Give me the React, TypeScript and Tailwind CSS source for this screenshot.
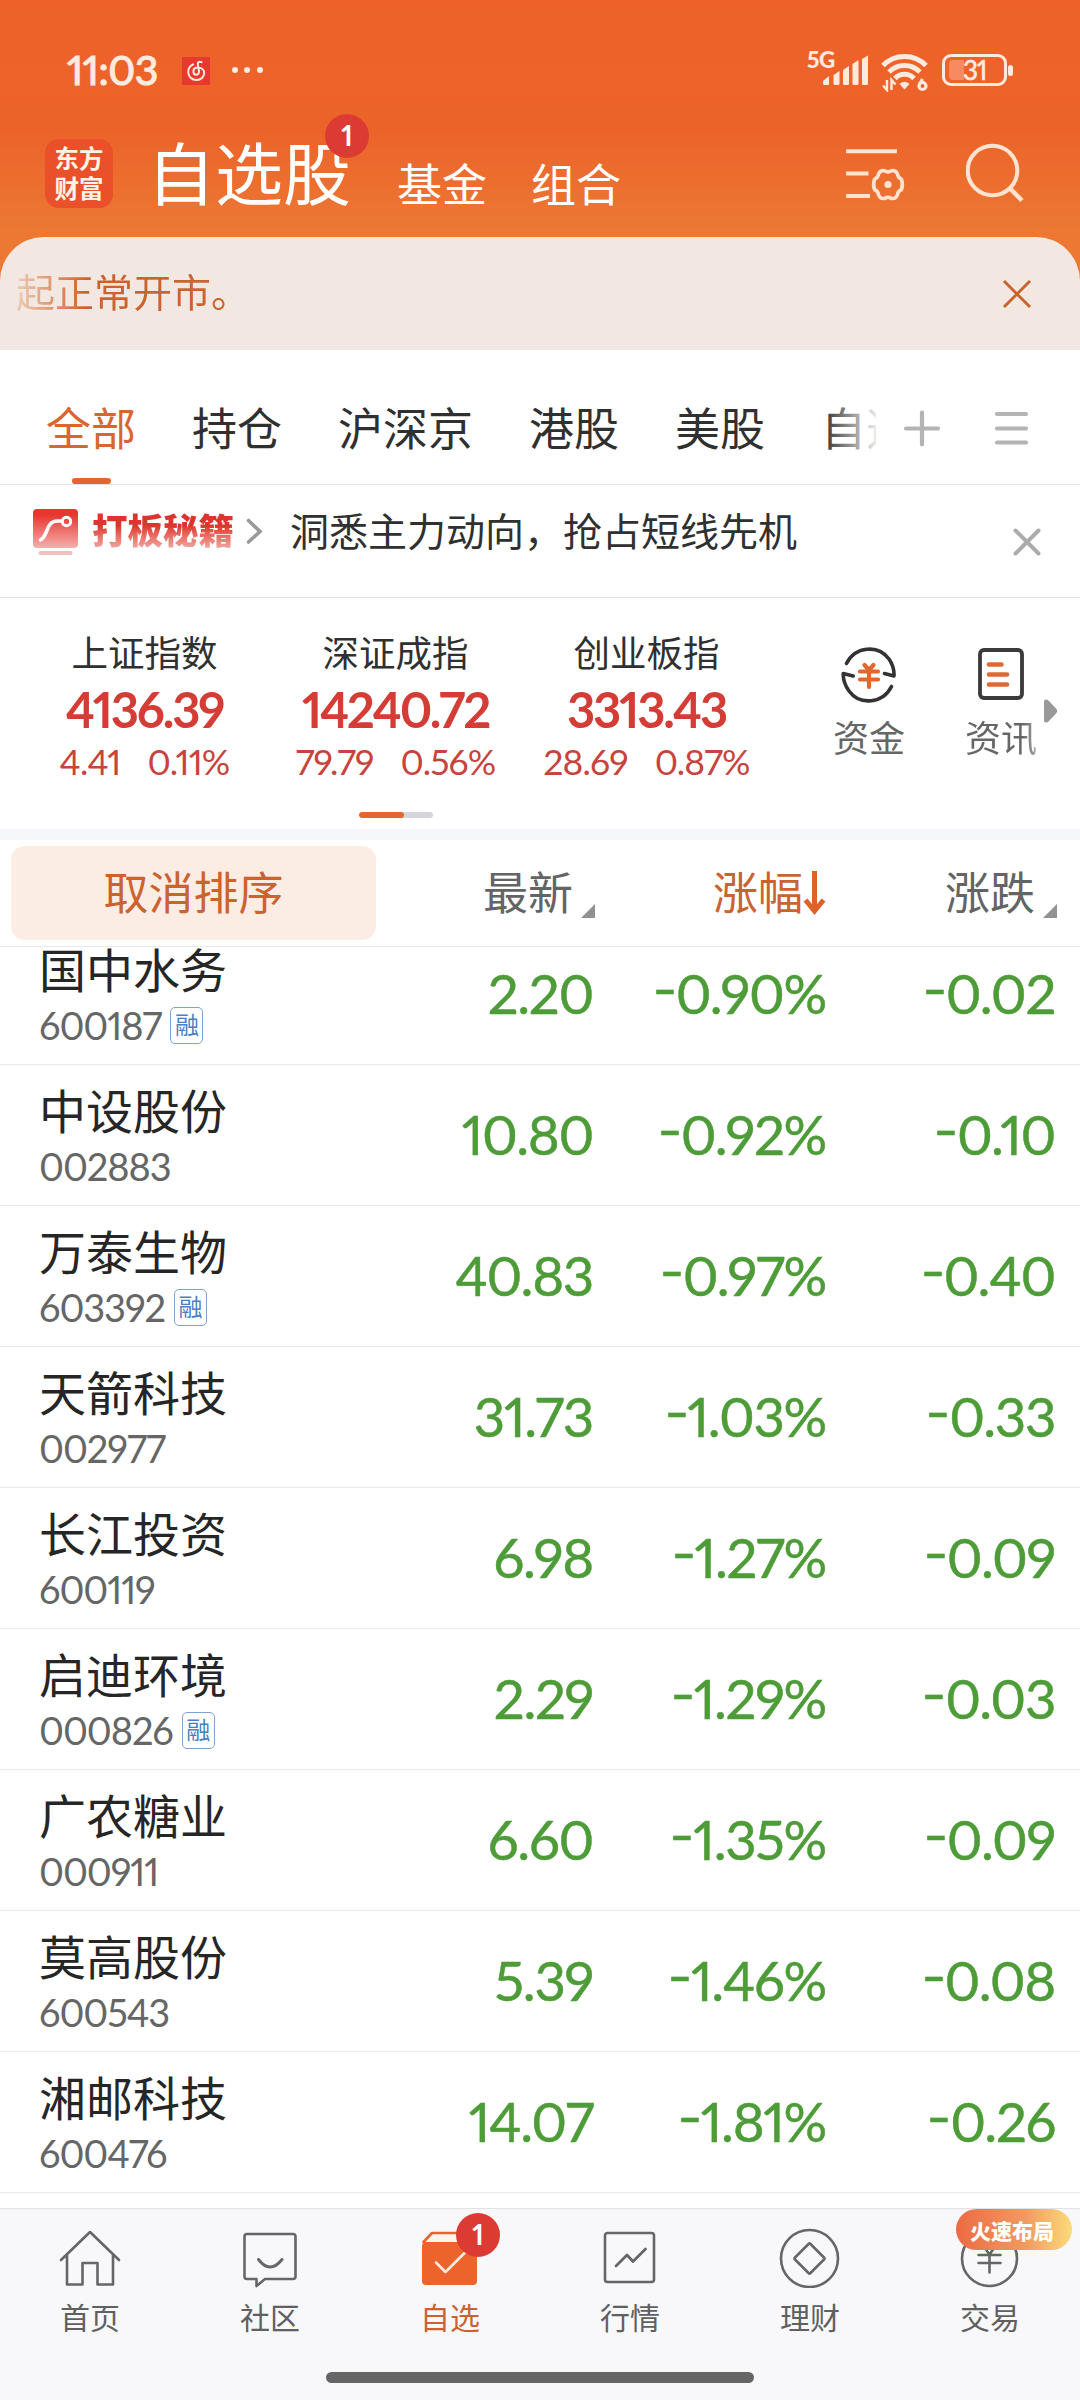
// ─────────────────────────────────────────────
//  Watchlist – Root Application
// ─────────────────────────────────────────────
import type { ReactNode } from 'react';

interface Stock {
  name: string;
  code: string;
  margin?: boolean;
  price: string;
  pct: string;
  diff: string;
}

const STOCKS: Stock[] = [
  { name: '国中水务', code: '600187', margin: true, price: '2.20',  pct: '-0.90%', diff: '-0.02' },
  { name: '中设股份', code: '002883',               price: '10.80', pct: '-0.92%', diff: '-0.10' },
  { name: '万泰生物', code: '603392', margin: true, price: '40.83', pct: '-0.97%', diff: '-0.40' },
  { name: '天箭科技', code: '002977',               price: '31.73', pct: '-1.03%', diff: '-0.33' },
  { name: '长江投资', code: '600119',               price: '6.98',  pct: '-1.27%', diff: '-0.09' },
  { name: '启迪环境', code: '000826', margin: true, price: '2.29',  pct: '-1.29%', diff: '-0.03' },
  { name: '广农糖业', code: '000911',               price: '6.60',  pct: '-1.35%', diff: '-0.09' },
  { name: '莫高股份', code: '600543',               price: '5.39',  pct: '-1.46%', diff: '-0.08' },
  { name: '湘邮科技', code: '600476',               price: '14.07', pct: '-1.81%', diff: '-0.26' },
];

const INDICES = [
  { name: '上证指数', value: '4136.39',  diff: '4.41',  pct: '0.11%' },
  { name: '深证成指', value: '14240.72', diff: '79.79', pct: '0.56%' },
  { name: '创业板指', value: '3313.43',  diff: '28.69', pct: '0.87%' },
];

const TABS = ['全部', '持仓', '沪深京', '港股', '美股', '自选'];

// ── Status bar ──
function StatusBar() {
  return (
    <div className="flex h-[114px] items-start pl-[67px] pr-[67px] pt-[46px] text-[#ffeadd]">
      <span className="h-12 w-[92px] whitespace-nowrap text-[41px] leading-[48px] tracking-[-0.500px] [-webkit-text-stroke:1.200px_currentColor]">11:03</span>
      <svg className="ml-[23px] mt-[11px]" width="28" height="28" viewBox="0 0 28 28" fill="none">
        <rect width="28" height="28" rx="1.5" fill="#e8392f" />
        <path
          d="M19.500 5.200c-2-1-4-.2-3.700 2l1.200 6.800c.4 2.500-1.300 3.700-2.700 3.700-1.700 0-2.900-1.400-2.900-3.200 0-2.300 1.900-3.800 4.300-3.900 4 0 6.500 2.300 6.500 5.500 0 3.800-3.300 6.900-7.700 6.900-4.700 0-8.300-3.400-8.300-7.900 0-3.500 1.800-6.200 4.900-7.700"
          stroke="#ffeadd" strokeWidth="2" strokeLinecap="round"
        />
      </svg>
      <svg className="ml-[21px] mt-5" width="34" height="8" viewBox="0 0 34 8" fill="currentColor">
        <circle cx="4" cy="4" r="3" />
        <circle cx="16" cy="4" r="3" />
        <circle cx="29" cy="4" r="3" />
      </svg>
      <div className="ml-auto flex">
        <span className="h-7 w-[29px] whitespace-nowrap text-[22.500px] font-black leading-7 tracking-[-0.500px]">5G</span>
        <svg className="-ml-[13px] mt-[9px]" width="46" height="31" viewBox="0 0 46 31" fill="currentColor">
          <path d="M0 26l6-5v9H1.500q-1.500 0-1.500-1.500zM10.500 20l6-4v12.500q0 1.500-1.500 1.500h-3q-1.500 0-1.500-1.500zM20 15l6-4v17.500q0 1.500-1.500 1.500h-3q-1.500 0-1.500-1.500zM29.500 9l6-4v23.500q0 1.500-1.500 1.500h-3q-1.500 0-1.500-1.500zM39 4l6-3.500v28q0 1.500-1.500 1.500h-3q-1.500 0-1.500-1.500z" />
        </svg>
        <svg className="ml-3" width="48" height="46" viewBox="0 0 48 46" fill="none" stroke="currentColor">
          <path d="M2 19.500a30 30 0 0 1 43 0M8 26a21.500 21.500 0 0 1 31 0M14 32.500a13 13 0 0 1 19 0" strokeWidth="5" />
          <path d="M18.500 38q5-4.500 10 0l-5 5.500z" fill="currentColor" stroke="none" />
          <path d="M6 34v10l-4-4.500M10.500 44V34l4 4.500" strokeWidth="2.400" />
          <path d="M41.500 33l-3.300 5.500" strokeWidth="3.200" />
          <circle cx="41.500" cy="40" r="3.500" strokeWidth="3.200" />
        </svg>
        <div className="ml-[13px] mt-2 flex h-8 w-[65px] items-center rounded-[9px] border-[3px] border-[#ffeadd] pl-1">
          <div className="h-5 w-[15px] rounded-l bg-[#f68b61]" />
          <span className="-ml-px text-[26px] leading-6 tracking-[-1px] [-webkit-text-stroke:0.600px_currentColor]">31</span>
        </div>
        <div className="ml-px mt-[19px] h-[11px] w-[5px] rounded bg-[#ffeadd]" />
      </div>
    </div>
  );
}

// ── Title bar ──
function Header() {
  return (
    <header className="flex h-[123px] items-start text-white">
      <div className="ml-[45px] mt-[25px] h-[69px] w-[68px] rounded-[14px] bg-[#ea5029] pt-[5px] text-center text-[24.500px] font-bold leading-[29.500px] text-[#fff3e6]">
        东方<br />财富
      </div>
      <div className="relative ml-[34px] mt-[20px] h-20 whitespace-nowrap text-[68px] leading-[80px]">
        自选股
        <span className="absolute left-[178px] top-[-20px] h-11 w-11 rounded-full bg-[#dc3b33] text-center text-[28px] font-bold leading-[42px]">1</span>
      </div>
      <span className="ml-[46px] mt-[41px] h-[60px] text-[45px] leading-[60px]">基金</span>
      <span className="ml-[44px] mt-[41px] h-[60px] text-[45px] leading-[60px]">组合</span>
      <svg className="ml-auto mt-[30px]" width="62" height="64" viewBox="0 0 62 64" fill="none" stroke="#ffe3d0" strokeWidth="4">
        <path d="M0 7.200h51M0 29.500h22.500M0 52h24" />
        <path
          d="M38.500 26.700q3.500 2.200 7 0q4.500-.8 6 3.500q.3 3.500 4 5q1.700 5.300 0 10.500q-3.700 1.500-4 5q-1.500 4.500-6 3.700q-3.500-2.200-7 0q-4.500.8-6-3.700q-.3-3.500-4-5q-1.700-5.200 0-10.500q3.700-1.500 4-5q1.500-4.300 6-3.500z"
          strokeWidth="3.600" strokeLinejoin="round"
        />
        <circle cx="42" cy="40.500" r="3.600" fill="#ffe3d0" stroke="none" />
      </svg>
      <svg className="ml-[58px] mr-[54px] mt-[28px]" width="60" height="62" viewBox="0 0 60 62" fill="none" stroke="#ffe3d0" strokeWidth="4">
        <circle cx="26.500" cy="28.500" r="24.800" />
        <path d="M44 46.500l12 12" strokeWidth="4.500" />
      </svg>
    </header>
  );
}

function NoticeBar() {
  return (
    <div className="flex h-[113px] items-center justify-between rounded-t-[44px] bg-[#f3e8e1] pl-4 pr-[47px]">
      <span className="mb-[3px] bg-linear-to-r from-[#ecccb5] via-[#c9632f] via-30% to-[#c9632f] bg-clip-text text-[39px] leading-[52px] text-transparent">
        起正常开市。
      </span>
      <svg width="32" height="32" viewBox="0 0 32 32" stroke="#c9632f" strokeWidth="3">
        <path d="M3 3l26 26M29 3L3 29" />
      </svg>
    </div>
  );
}

// ── Group tabs ──
function GroupTabs() {
  return (
    <div className="flex h-[135px] items-stretch border-b border-[#e2e2e2]">
      <div className="relative flex w-[876px] gap-[56px] overflow-hidden pl-[46px]">
        {TABS.map((tab, i) => (
          <div key={tab} className="flex shrink-0 flex-col items-center">
            <span className={`mt-[49px] text-[45px] leading-[60px] ${i === 0 ? 'text-[#d9652f]' : 'text-[#303030]'}`}>{tab}</span>
            {i === 0 && <div className="mt-auto h-[6px] w-[39px] rounded-full bg-[#e4652f]" />}
          </div>
        ))}
        <div className="absolute inset-y-0 right-0 w-[54px] bg-linear-to-r from-white/0 to-white/90" />
      </div>
      <svg className="ml-[27px] mt-[59px]" width="38" height="38" viewBox="0 0 38 38" stroke="#b4b4b4" strokeWidth="4.200" strokeLinecap="round">
        <path d="M3 19.500h32M19 3.500v32" />
      </svg>
      <svg className="ml-[53px] mt-[59px]" width="36" height="38" viewBox="0 0 36 38" stroke="#b4b4b4" strokeWidth="4.200" strokeLinecap="round">
        <path d="M3 5h29M3 19.500h29M3 33.500h29" />
      </svg>
    </div>
  );
}

function PromoRow() {
  return (
    <div className="flex h-[113px] items-start border-b border-[#e2e2e2] pl-[33px]">
      <svg className="mt-6" width="46" height="48" viewBox="0 0 46 48" fill="none">
        <defs>
          <linearGradient id="promo" x1="0" y1="0" x2="0" y2="1">
            <stop offset="0.150" stopColor="#e7362f" />
            <stop offset="1" stopColor="#f3b0ae" />
          </linearGradient>
        </defs>
        <rect width="45" height="39" rx="4" fill="url(#promo)" />
        <rect x="5.500" y="42" width="34" height="4" rx="2" fill="#efc0c0" />
        <path d="M7.500 31c8-4 5-19 17-19h4.500" stroke="#fff" strokeWidth="3.600" strokeLinecap="round" />
        <circle cx="33.500" cy="12.500" r="4.200" stroke="#fff" strokeWidth="3" />
      </svg>
      <span className="ml-[13px] mt-[21px] w-[144px] whitespace-nowrap bg-linear-to-b from-[#dd352d] from-40% to-[#f0a5a2] to-85% bg-clip-text text-[35.500px] font-black leading-[50px] text-transparent">
        打板秘籍
      </span>
      <svg className="ml-[8px] mt-[32px]" width="20" height="28" viewBox="0 0 20 28" fill="none" stroke="#999" strokeWidth="3.600" strokeLinecap="round">
        <path d="M4.500 3.500L16 14.500L4.500 25" />
      </svg>
      <span className="ml-[26px] mt-[20px] whitespace-nowrap text-[39px] leading-[52px] text-[#303030]">洞悉主力动向，抢占短线先机</span>
      <svg className="ml-auto mr-[38px] mt-[42px]" width="30" height="30" viewBox="0 0 30 30" stroke="#acacac" strokeWidth="4" strokeLinecap="round">
        <path d="M3.500 3.500l23 23M26.500 3.500l-23 23" />
      </svg>
    </div>
  );
}

// ── Index strip ──
function IndexStrip() {
  return (
    <div className="relative flex h-[231px] pl-[19px]">
      {INDICES.map(ix => (
        <div key={ix.name} className="flex w-[251px] flex-col items-center whitespace-nowrap text-[#c8433d]">
          <span className="mt-[31px] text-[36.500px] leading-[48px] text-[#303030]">{ix.name}</span>
          <span className="mt-[5px] text-[49px] font-bold leading-[54px] tracking-[-2.200px] text-[#d33d36]">{ix.value}</span>
          <div className="mt-[5px] flex gap-[27px] text-[35.500px] leading-[42px] tracking-[-0.900px]">
            <span>{ix.diff}</span>
            <span>{ix.pct}</span>
          </div>
        </div>
      ))}
      <div className="ml-[31px] flex w-[132px] flex-col items-center">
        <svg className="mt-12" width="58" height="58" viewBox="0 0 58 58" fill="none" stroke="#333" strokeWidth="3.600" strokeLinecap="round" strokeLinejoin="round">
          <path d="M6.500 17.500C15 .5 38 -2 49 13q5.500 8 5 17l-9.500-2.500" />
          <path d="M51.500 40.500C43 57.500 20 60 9 45Q3 37 3.200 27.500l10 2.500" />
          <path d="M24.500 19l4.500 5l4.500-5M20 25.500h18M20 33.500h18M29 24v17" stroke="#e0672f" strokeWidth="4.200" />
        </svg>
        <span className="mt-[10px] text-[36px] leading-[48px] text-[#666]">资金</span>
      </div>
      <div className="flex w-[132px] flex-col items-center">
        <svg className="mt-12" width="58" height="58" viewBox="0 0 58 58" fill="none" stroke="#3a3a3a" strokeWidth="3.800" strokeLinecap="round">
          <rect x="8" y="4" width="42" height="48" rx="4" />
          <path d="M17 18.500h12.500M17 28.500h18M17 38.500h18" stroke="#df6934" strokeWidth="4.600" />
        </svg>
        <span className="mt-[10px] bg-linear-to-r from-[#666] from-80% to-[#aaa] bg-clip-text text-[36px] leading-[48px] text-transparent">资讯</span>
      </div>
      <svg className="absolute right-[22px] top-[100px]" width="14" height="26" viewBox="0 0 14 26" fill="#999">
        <path d="M0 3Q1 .5 4 2L12.500 11Q14 13 12.500 15L4 24Q1 25.500 0 23z" />
      </svg>
      <div className="absolute left-[359px] top-[214px] h-[6px] w-[74px] overflow-hidden rounded-full bg-[#d5d6dc]">
        <div className="h-full w-[45px] rounded-full bg-[#e4652f]" />
      </div>
    </div>
  );
}

function Corner() {
  return (
    <svg className="mt-9" width="14" height="14" viewBox="0 0 14 14" fill="#909095">
      <path d="M14 0v14H0z" />
    </svg>
  );
}

function TableHead() {
  return (
    <div className="flex h-[107px] items-center border-b border-[#e9e9e9] pl-[11px] text-[45px] leading-[60px] text-[#646464]">
      <button className="h-[94px] w-[365px] rounded-[14px] bg-[#fbede4] text-[#cb6330]">取消排序</button>
      <div className="flex w-[219px] items-center justify-end gap-[8px]">最新<Corner /></div>
      <div className="flex w-[231px] items-center justify-end text-[#cb6330]">
        涨幅
        <svg width="23" height="46" viewBox="0 0 23 46" fill="none" stroke="#dc622a" strokeWidth="5">
          <path d="M11.500 1v38M2.500 30l9 11l9-11" />
        </svg>
      </div>
      <div className="flex w-[231px] items-center justify-end gap-[8px]">涨跌<Corner /></div>
    </div>
  );
}

// The sign is wider and sits higher than the font's own hyphen
function Signed({ value }: { value: string }) {
  return (
    <>
      <span className="relative bottom-[3px] inline-block origin-right scale-x-[1.250]">-</span>
      {value.slice(1)}
    </>
  );
}

function StockRow({ stock }: { stock: Stock }) {
  return (
    <div className="flex h-[141px] shrink-0 border-b border-[#e9e9e9] pl-[39px]">
      <div className="w-[260px]">
        <div className="mt-4 text-[47px] leading-[60px] text-[#262626]">{stock.name}</div>
        <div className="mt-px flex h-12 items-center gap-[9px]">
          <span className="text-[38px] leading-[48px] tracking-[-1.100px] text-[#666]">{stock.code}</span>
          {stock.margin && (
            <span className="h-[37px] w-[33px] rounded-[5px] border-[1.500px] border-[#7da3d3] text-center text-[24px] leading-[34px] text-[#4a7fc1]">融</span>
          )}
        </div>
      </div>
      <div className="flex text-right text-[54.500px] leading-[139px] tracking-[-1.300px] text-[#4d9c38] [-webkit-text-stroke:0.500px_currentColor]">
        <span className="w-[294px]">{stock.price}</span>
        <span className="w-[233px]"><Signed value={stock.pct} /></span>
        <span className="w-[229px]"><Signed value={stock.diff} /></span>
      </div>
    </div>
  );
}

// ── Bottom navigation ──
function NavItem({ label, active, children }: { label: string; active?: boolean; children: ReactNode }) {
  return (
    <div className="relative flex w-[180px] flex-col items-center pt-[19px]">
      {children}
      <span className={`mt-[9px] text-[30px] leading-10 ${active ? 'text-[#cb6330]' : 'text-[#606060]'}`}>{label}</span>
    </div>
  );
}

function NavIcon({ children }: { children: ReactNode }) {
  return (
    <svg width="62" height="60" viewBox="0 0 62 60" fill="none" stroke="#666" strokeWidth="2.600" strokeLinejoin="round" strokeLinecap="round">
      {children}
    </svg>
  );
}

function BottomNav() {
  return (
    <nav className="h-[192px] border-t border-[#e2e2e2] bg-[#f8f8fb]">
      <div className="flex h-[163px]">
        <NavItem label="首页">
          <NavIcon>
            <path d="M2 32L31 4L60 32M8 27v29.500h15.500V35h15v21.500H54V27" />
          </NavIcon>
        </NavItem>
        <NavItem label="社区">
          <NavIcon>
            <path d="M8 6h46q2.500 0 2.500 2.500v40q0 2.500-2.500 2.500H26l-8.500 7v-7H8q-2.500 0-2.500-2.500v-40Q5.500 6 8 6z" />
            <path d="M19.500 31.500q11.500 15 23.500 0" strokeWidth="3" />
          </NavIcon>
        </NavItem>
        <NavItem label="自选" active>
          <NavIcon>
            <path d="M4.500 14L13 5h37l7 9" stroke="#e4652f" fill="#fff5ee" />
            <rect x="3" y="14" width="55" height="43" rx="4" fill="#ec632b" stroke="none" />
            <path d="M17 34.500l9.500 9.500l20-20" stroke="#ffeadd" />
          </NavIcon>
          <span className="absolute left-[96px] top-[4px] h-11 w-11 rounded-full bg-[#dc3b33] text-center text-[28px] font-bold leading-[42px] text-white">1</span>
        </NavItem>
        <NavItem label="行情">
          <NavIcon>
            <rect x="6" y="5" width="49" height="49" rx="2.500" />
            <path d="M17 38l11-11l6 6.500l12.500-12.500" strokeWidth="2.800" />
          </NavIcon>
        </NavItem>
        <NavItem label="理财">
          <NavIcon>
            <circle cx="30.500" cy="30.500" r="28.500" />
            <path d="M29.500 16q1-1 2 0l13.500 13.500q1 1 0 2L31.500 45q-1 1-2 0L16 31.500q-1-1 0-2z" />
          </NavIcon>
        </NavItem>
        <NavItem label="交易">
          <NavIcon>
            <circle cx="30.500" cy="30.500" r="27.500" />
            <path d="M23 16l7.500 10.500L38 16M19.500 27h22M19.500 35h22M30.500 27v17.500" />
          </NavIcon>
          <span className="absolute left-[56px] top-0 h-[41px] w-[116px] whitespace-nowrap rounded-full bg-linear-to-r from-[#ec6a43] via-[#f09a60] via-60% to-[#fadb7c] pl-[14px] text-[21px] font-black leading-[44px] text-white">
            火速布局
          </span>
        </NavItem>
      </div>
      <div className="mx-auto h-[11px] w-[428px] rounded-full bg-[#666]" />
    </nav>
  );
}

export default function App() {
  return (
    <div className="flex h-[2400px] w-[1080px] flex-col overflow-hidden bg-white font-['Lato','Noto_Sans_CJK_SC',sans-serif] [font-feature-settings:'pnum','case']">
      <div className="bg-[linear-gradient(#ee622a_0px,#ec632a_130px,#ec7834_230px,#ec7834_290px)]">
        <StatusBar />
        <Header />
        <NoticeBar />
      </div>
      <GroupTabs />
      <PromoRow />
      <IndexStrip />
      <div className="h-[11px] bg-[#f6f7fa]" />
      <TableHead />

      {/* List is scrolled, the first row is cut by the table head */}
      <div className="flex flex-1 flex-col overflow-hidden">
        <div className="-mt-[23px] flex flex-col">
          {STOCKS.map(stock => <StockRow key={stock.code} stock={stock} />)}
        </div>
      </div>

      <BottomNav />
    </div>
  );
}
